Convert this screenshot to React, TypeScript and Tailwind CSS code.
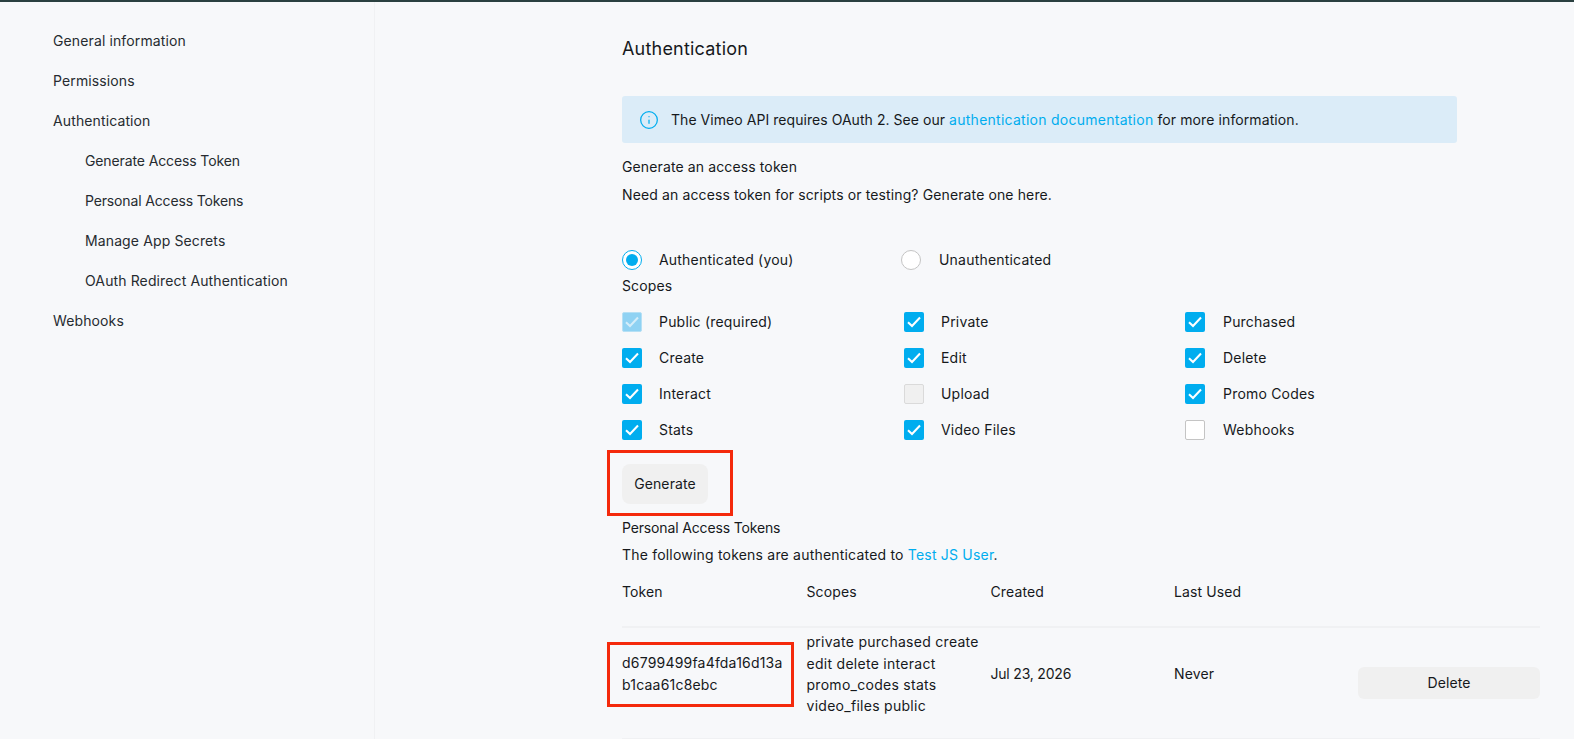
import { Info } from "lucide-react";

const navItems = [
  { label: "General information", className: "" },
  { label: "Permissions", className: "" },
  { label: "Authentication", className: "" },
  { label: "Generate Access Token", className: "pl-8 tracking-[-0.12px]" },
  { label: "Personal Access Tokens", className: "pl-8 tracking-[-0.15px]" },
  { label: "Manage App Secrets", className: "pl-8" },
  { label: "OAuth Redirect Authentication", className: "pl-8" },
  { label: "Webhooks", className: "" },
];

type ScopeState = "checked" | "locked" | "disabled" | "empty";

const scopes: { label: string; state: ScopeState }[][] = [
  [
    { label: "Public (required)", state: "locked" },
    { label: "Private", state: "checked" },
    { label: "Purchased", state: "checked" },
  ],
  [
    { label: "Create", state: "checked" },
    { label: "Edit", state: "checked" },
    { label: "Delete", state: "checked" },
  ],
  [
    { label: "Interact", state: "checked" },
    { label: "Upload", state: "disabled" },
    { label: "Promo Codes", state: "checked" },
  ],
  [
    { label: "Stats", state: "checked" },
    { label: "Video Files", state: "checked" },
    { label: "Webhooks", state: "empty" },
  ],
];

const boxStyles: Record<ScopeState, string> = {
  checked: "bg-[#00adef]",
  locked: "bg-[#8fd2f3] border border-[#b5e0f5]",
  disabled: "bg-[#f0f0f0] border border-[#dadada]",
  empty: "bg-white border border-[#c4c4c4]",
};

const Checkbox = ({ state }: { state: ScopeState }) => (
  <span className={`w-5 h-5 rounded-[2px] flex items-center justify-center shrink-0 ${boxStyles[state]}`}>
    {(state === "checked" || state === "locked") && (
      <svg width="14" height="12" viewBox="0 0 14 12" fill="none">
        <path
          d="M1 6.2 L5 10 L13 1.5"
          stroke={state === "locked" ? "#d4edf9" : "#fff"}
          strokeWidth="2"
        />
      </svg>
    )}
  </span>
);

const App = () => {
  return (
    <div className="h-screen overflow-hidden bg-[#f7f8fa] text-[#16191c] font-['Inter',sans-serif] text-[14px] leading-5 tracking-[0.12px]">
      <div className="h-[2px] bg-[#2a4040]" />
      <div className="flex h-[737px]">
        <aside className="w-[375px] shrink-0 border-r border-[#f0f1f3] pt-[19px] pl-[53px] text-[#262b30]">
          {navItems.map((item) => (
            <div key={item.label} className={`h-10 flex items-center ${item.className}`}>
              {item.label}
            </div>
          ))}
        </aside>

        <main className="flex-1 pl-[247px] pt-[35px]">
          <h1 className="text-[18px] leading-6 tracking-[0.2px]">Authentication</h1>

          <div className="mt-[35px] w-[835px] h-[47px] rounded-[3px] bg-[#dbecf8] flex items-center pl-[17px]">
            <Info size={20} strokeWidth={1.5} className="text-[#00adef] shrink-0" />
            <p className="ml-3 tracking-[0.05px]">
              The Vimeo API requires OAuth 2. See our{" "}
              <span className="text-[#00adef] tracking-[0.26px]">authentication documentation</span>{" "}
              <span className="tracking-[0.1px]">for more information.</span>
            </p>
          </div>

          <p className="mt-[14px]">Generate an access token</p>
          <p className="mt-2">Need an access token for scripts or testing? Generate one here.</p>

          <div className="mt-[45px] flex h-5 tracking-[0.2px]">
            <div className="w-[279px] flex items-center">
              <span className="w-5 h-5 rounded-full bg-white border border-[#00adef] flex items-center justify-center">
                <span className="w-3 h-3 rounded-full bg-[#00adef]" />
              </span>
              <span className="ml-[17px]">Authenticated (you)</span>
            </div>
            <div className="flex items-center">
              <span className="w-5 h-5 rounded-full bg-white border border-[#c4c4c4]" />
              <span className="ml-[18px]">Unauthenticated</span>
            </div>
          </div>

          <p className="mt-[6px]">Scopes</p>

          <div className="mt-4 flex flex-col gap-4 tracking-[0.2px]">
            {scopes.map((row) => (
              <div key={row[0].label} className="grid grid-cols-[282px_281px_auto] h-5">
                {row.map((scope, i) => (
                  <div key={scope.label} className="flex items-center">
                    <Checkbox state={scope.state} />
                    <span className={i === 2 ? "ml-[18px]" : "ml-[17px]"}>{scope.label}</span>
                  </div>
                ))}
              </div>
            ))}
          </div>

          <div className="relative mt-6 w-fit">
            <button className="w-[86px] h-10 rounded-lg bg-[#f0f0f0] text-center">Generate</button>
            <div className="absolute -left-[15px] -top-[14px] w-[126px] h-[66px] border-[3px] border-[#f42a0c]" />
          </div>

          <p className="mt-[14px] tracking-[-0.15px]">Personal Access Tokens</p>
          <p className="mt-[7px] tracking-[0.2px]">
            The following tokens are authenticated to <span className="text-[#00adef]">Test JS User</span>.
          </p>

          <div className="w-[918px] mt-[17px]">
            <div className="grid grid-cols-[184.5px_184px_183.5px_184px_182px] pb-6 border-b-2 border-[#f0f1f3]">
              <span>Token</span>
              <span>Scopes</span>
              <span>Created</span>
              <span>Last Used</span>
            </div>
            <div className="grid grid-cols-[184.5px_184px_183.5px_184px_182px] h-[111px] items-center border-b border-[#f0f1f3]">
              <div className="relative -mt-[18px] w-[165px] break-all leading-[22px] tracking-[0.2px]">
                d6799499fa4fda16d13ab1caa61c8ebc
                <div className="absolute -left-[15px] -top-[10px] w-[187px] h-[65px] border-[3px] border-[#f42a0c]" />
              </div>
              <div className="-mt-[18px] w-[180px] leading-[21.3px] tracking-[0.28px]">
                private purchased create edit delete interact promo_codes stats video_files public
              </div>
              <div className="-mt-[18px] tracking-[-0.2px]">Jul 23, 2026</div>
              <div className="-mt-[18px]">Never</div>
              <button className="h-8 w-[182px] rounded-md bg-[#f0f0f0] text-center">Delete</button>
            </div>
          </div>
        </main>
      </div>
    </div>
  );
};

export default App;
